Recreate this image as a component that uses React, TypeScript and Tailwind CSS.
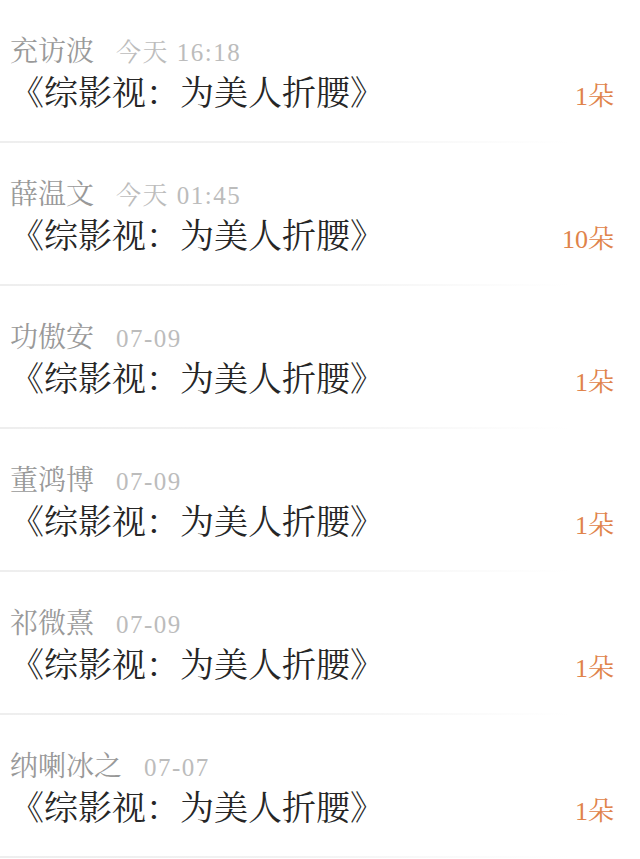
import React from 'react';

interface Gift {
  name: string;
  time: string;
  book: string;
  count: number;
}

const gifts: Gift[] = [
  { name: '充访波', time: '今天 16:18', book: '综影视：为美人折腰', count: 1 },
  { name: '薛温文', time: '今天 01:45', book: '综影视：为美人折腰', count: 10 },
  { name: '功傲安', time: '07-09', book: '综影视：为美人折腰', count: 1 },
  { name: '董鸿博', time: '07-09', book: '综影视：为美人折腰', count: 1 },
  { name: '祁微熹', time: '07-09', book: '综影视：为美人折腰', count: 1 },
  { name: '纳喇冰之', time: '07-07', book: '综影视：为美人折腰', count: 1 },
];

const serif = "font-['Liberation_Serif','Noto_Serif_CJK_SC','Noto_Sans_CJK_SC',serif]";

function GiftRow({ gift }: { gift: Gift }) {
  return (
    <div className="h-[143px] flex flex-col">
      <div className="flex-1 pt-[34px] pl-[10px] pr-[26px]">
        <div className="flex items-baseline h-[36px]">
          <span className="text-[28px] leading-[36px] text-[#999999]">{gift.name}</span>
          <span className="ml-[22px] text-[25px] leading-[36px] tracking-[1.5px] text-[#bcbcbc]">{gift.time}</span>
        </div>
        <div className="flex items-baseline justify-between mt-[2px]">
          <span className="text-[34px] leading-[44px] text-[#262626]">《{gift.book}》</span>
          <span className="text-[26px] leading-[44px] text-[#e0834a]">{gift.count}朵</span>
        </div>
      </div>
      <div className="h-[2px] w-[570px] bg-gradient-to-r from-[#eeeeee] via-[#f2f2f2] to-transparent" />
    </div>
  );
}

export default function App() {
  return (
    <div className={`w-[640px] min-h-[859px] bg-white overflow-hidden ${serif}`}>
      {gifts.map((g, i) => (
        <GiftRow key={i} gift={g} />
      ))}
    </div>
  );
}
